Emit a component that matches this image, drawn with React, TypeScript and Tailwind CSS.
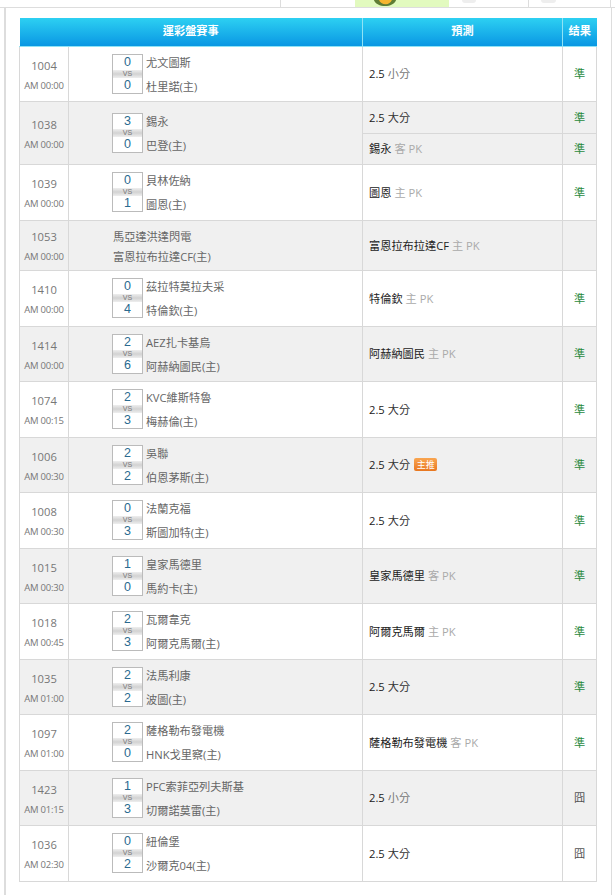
type Pick = { main: string; sub: string; badge?: boolean; result?: string }

type Match = {
  id: string
  time: string
  home?: number
  away?: number
  a: string
  b: string
  picks: Pick[]
}

const matches: Match[] = [
  { id: '1004', time: 'AM 00:00', home: 0, away: 0, a: '尤文圖斯', b: '杜里諾(主)', picks: [{ main: '2.5', sub: '小分', result: '準' }] },
  { id: '1038', time: 'AM 00:00', home: 3, away: 0, a: '錫永', b: '巴登(主)', picks: [{ main: '2.5', sub: '大分', result: '準' }, { main: '錫永', sub: '客 PK', result: '準' }] },
  { id: '1039', time: 'AM 00:00', home: 0, away: 1, a: '貝林佐納', b: '圖恩(主)', picks: [{ main: '圖恩', sub: '主 PK', result: '準' }] },
  { id: '1053', time: 'AM 00:00', a: '馬亞達洪達閃電', b: '富恩拉布拉達CF(主)', picks: [{ main: '富恩拉布拉達CF', sub: '主 PK' }] },
  { id: '1410', time: 'AM 00:00', home: 0, away: 4, a: '茲拉特莫拉夫采', b: '特倫欽(主)', picks: [{ main: '特倫欽', sub: '主 PK', result: '準' }] },
  { id: '1414', time: 'AM 00:00', home: 2, away: 6, a: 'AEZ扎卡基烏', b: '阿赫納圖民(主)', picks: [{ main: '阿赫納圖民', sub: '主 PK', result: '準' }] },
  { id: '1074', time: 'AM 00:15', home: 2, away: 3, a: 'KVC維斯特魯', b: '梅赫倫(主)', picks: [{ main: '2.5', sub: '大分', result: '準' }] },
  { id: '1006', time: 'AM 00:30', home: 2, away: 2, a: '吳聯', b: '伯恩茅斯(主)', picks: [{ main: '2.5', sub: '大分', badge: true, result: '準' }] },
  { id: '1008', time: 'AM 00:30', home: 0, away: 3, a: '法蘭克福', b: '斯圖加特(主)', picks: [{ main: '2.5', sub: '大分', result: '準' }] },
  { id: '1015', time: 'AM 00:30', home: 1, away: 0, a: '皇家馬德里', b: '馬約卡(主)', picks: [{ main: '皇家馬德里', sub: '客 PK', result: '準' }] },
  { id: '1018', time: 'AM 00:45', home: 2, away: 3, a: '瓦爾韋克', b: '阿爾克馬爾(主)', picks: [{ main: '阿爾克馬爾', sub: '主 PK', result: '準' }] },
  { id: '1035', time: 'AM 01:00', home: 2, away: 2, a: '法馬利康', b: '波圖(主)', picks: [{ main: '2.5', sub: '大分', result: '準' }] },
  { id: '1097', time: 'AM 01:00', home: 2, away: 0, a: '薩格勒布發電機', b: 'HNK戈里察(主)', picks: [{ main: '薩格勒布發電機', sub: '客 PK', result: '準' }] },
  { id: '1423', time: 'AM 01:15', home: 1, away: 3, a: 'PFC索菲亞列夫斯基', b: '切爾諾莫雷(主)', picks: [{ main: '2.5', sub: '小分', result: '囧' }] },
  { id: '1036', time: 'AM 02:30', home: 0, away: 2, a: '紐倫堡', b: '沙爾克04(主)', picks: [{ main: '2.5', sub: '大分', result: '囧' }] },
]

// row heights read off the picture, the split row has one per pick
const heights = [[55], [32, 31], [56], [50], [56], [55], [56], [55], [56], [55], [56], [55], [56], [55], [56]]

const cell = 'border border-[#d8d8d8] p-0'

function ScoreBox({ home, away }: { home: number; away: number }) {
  return (
    <div className="w-[31px] shrink-0 border border-[#bbb] bg-white text-center text-[#2a6a90] text-[12.5px] font-['Liberation_Sans',sans-serif]">
      <div className="h-[15px] leading-[15px]">{home}</div>
      <div className="h-[8px] bg-gradient-to-b from-[#eee] via-[#d2d2d2] to-[#eee] text-[7px] leading-[8px] text-[#777]">VS</div>
      <div className="h-[15px] leading-[15px]">{away}</div>
    </div>
  )
}

function TeamCell({ m }: { m: Match }) {
  const hasScore = m.home !== undefined
  return (
    <div className={`flex items-center ${hasScore ? 'pl-[43px]' : 'pl-[44px]'}`}>
      {hasScore && <ScoreBox home={m.home!} away={m.away!} />}
      <div
        className={`flex flex-col text-[11.2px] leading-[16px] text-[#666] ${
          hasScore ? 'ml-[3px] gap-[8px] translate-y-[1px]' : 'gap-[4px] translate-y-[2px]'
        }`}
      >
        <span>{m.a}</span>
        <span>{m.b}</span>
      </div>
    </div>
  )
}

function PickCell({ pick }: { pick: Pick }) {
  const subColor = pick.sub === '大分' ? 'text-[#333]' : pick.sub === '小分' ? 'text-[#777]' : 'text-[#aaa]'
  return (
    <td className={cell}>
      <div className="flex items-center pl-[6px] pt-[2px] text-[11.2px] text-[#222]">
        {pick.main}
        <span className={`ml-[3px] ${subColor}`}>{pick.sub}</span>
        {pick.badge && (
          <span className="ml-[4px] mb-[2px] w-[23px] h-[13px] rounded-[2px] bg-gradient-to-b from-[#f9a550] to-[#e8771f] text-white text-[9px] leading-[13px] text-center font-['Noto_Sans_CJK_TC',sans-serif]">
            主推
          </span>
        )}
      </div>
    </td>
  )
}

function ResultCell({ result }: { result?: string }) {
  return (
    <td className={`${cell} pt-[2px] text-center text-[11.2px] ${result === '準' ? 'text-[#2a8a3e]' : 'text-[#555]'}`}>
      {result}
    </td>
  )
}

export default function App() {
  return (
    <div className="w-[615px] h-[895px] overflow-hidden bg-white font-['Open_Sans','Noto_Sans_CJK_TC',sans-serif]">
      {/* bottom of the tab strip above the table */}
      <div className="flex h-[8px] border-b border-[#ddd] pl-[280px]">
        <div className="w-[75px] border-l border-[#ddd]" />
        <div className="w-[94px] bg-[#e2fabf] pl-[17px]">
          <svg width="26" height="6" viewBox="0 0 26 7">
            <path d="M0 0 C2 5 7 7 13 7 C19 7 24 5 26 0 Z" fill="#5f7d35" />
            <path d="M6 0 C7 3 10 5 14 5 C17 5 20 3 21 0 Z" fill="#f6b52e" />
          </svg>
        </div>
        <div className="w-[80px] border-r border-[#ddd] pl-[13px]">
          <div className="w-[14px] h-[3px] rounded-b bg-[#eee]" />
        </div>
        <div className="w-[82px] border-r border-[#ddd] pl-[12px]">
          <div className="w-[15px] h-[3px] rounded-b bg-[#eee]" />
        </div>
      </div>

      <div className="ml-[4px] w-[608px] h-[887px] border-l-2 border-r border-[#ddd] pt-[10px] pl-[13px]">
        <table className="w-[577px] table-fixed border-collapse">
          <colgroup>
            <col className="w-[49px]" />
            <col className="w-[294px]" />
            <col className="w-[200px]" />
            <col className="w-[34px]" />
          </colgroup>
          <thead>
            <tr className="h-[28px] bg-gradient-to-b from-[#2dd0f2] to-[#0a97e3] text-white text-[11.2px]">
              <th colSpan={2} className="border-b border-[#8fe3f5] font-bold p-0">運彩盤賽事</th>
              <th className="border-x border-b border-[#8fe3f5] font-bold p-0">預測</th>
              <th className="border-b border-[#8fe3f5] font-bold p-0">结果</th>
            </tr>
          </thead>
          <tbody>
            {matches.map((m, i) => {
              const rowBg = i % 2 === 1 ? 'bg-[#f0f0f0]' : 'bg-white'
              const rows = m.picks.length
              return m.picks.map((p, j) => (
                <tr key={`${m.id}-${j}`} className={rowBg} style={{ height: heights[i][j] }}>
                  {j === 0 && (
                    <>
                      <td rowSpan={rows} className={`${cell} text-center text-[#777]`}>
                        <div className="pt-[4px] text-[11.2px] leading-[16px] mb-[4px]">{m.id}</div>
                        <div className="text-[9.5px] leading-[16px] tracking-[-0.2px]">{m.time}</div>
                      </td>
                      <td rowSpan={rows} className={cell}>
                        <TeamCell m={m} />
                      </td>
                    </>
                  )}
                  <PickCell pick={p} />
                  <ResultCell result={p.result} />
                </tr>
              ))
            })}
          </tbody>
        </table>
      </div>
    </div>
  )
}
